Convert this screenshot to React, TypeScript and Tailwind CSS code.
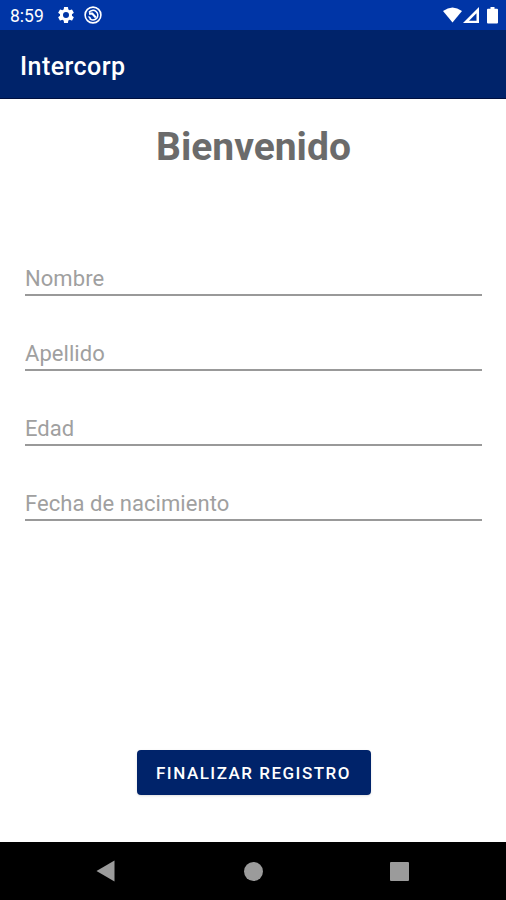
import React from 'react';

const fields = [
  { name: 'nombre', label: 'Nombre' },
  { name: 'apellido', label: 'Apellido' },
  { name: 'edad', label: 'Edad' },
  { name: 'fecha', label: 'Fecha de nacimiento' },
];

const StatusBar: React.FC = () => (
  <div className="flex h-[30px] items-center bg-[#0035a6] pl-[10px] pr-[8px] text-white">
    <span className="w-[34px] whitespace-nowrap pt-[3px] text-[17.5px] leading-none">8:59</span>
    <svg className="ml-[12px] h-5 w-5" viewBox="0 0 24 24" fill="currentColor">
      <path d="M19.14 12.94c.04-.3.06-.61.06-.94 0-.32-.02-.64-.07-.94l2.03-1.58a.49.49 0 0 0 .12-.61l-1.92-3.32a.488.488 0 0 0-.59-.22l-2.39.96c-.5-.38-1.03-.7-1.62-.94l-.36-2.54a.484.484 0 0 0-.48-.41h-3.84c-.24 0-.43.17-.47.41l-.36 2.54c-.59.24-1.13.57-1.62.94l-2.39-.96c-.22-.08-.47 0-.59.22L2.74 8.87c-.12.21-.08.47.12.61l2.03 1.58c-.05.3-.09.63-.09.94s.02.64.07.94l-2.03 1.58a.49.49 0 0 0-.12.61l1.92 3.32c.12.22.37.29.59.22l2.39-.96c.5.38 1.03.7 1.62.94l.36 2.54c.05.24.24.41.48.41h3.84c.24 0 .44-.17.47-.41l.36-2.54c.59-.24 1.13-.56 1.62-.94l2.39.96c.22.08.47 0 .59-.22l1.92-3.32c.12-.22.07-.47-.12-.61l-2.01-1.58zM12 15.6A3.6 3.6 0 1 1 12 8.4a3.6 3.6 0 0 1 0 7.2z" />
    </svg>
    <svg className="ml-[8px] h-[18px] w-[18px]" viewBox="0 0 18 18" fill="none" stroke="currentColor">
      <circle cx="9" cy="9" r="7.9" strokeWidth="1.6" />
      <path d="M5 6.500A4.800 4.800 0 1 1 5.500 12.400" strokeWidth="1.5" />
      <path d="M5 7.600h3.200l3.600 3.800" strokeWidth="2.2" />
      <path d="M4.500 10.500l2.500 2.200" strokeWidth="1.4" />
    </svg>
    <svg className="ml-auto h-[16px] w-[19px]" viewBox="0 0 19 16" fill="currentColor">
      <path d="M9.500 15.500L0 4Q9.500-3 19 4z" />
    </svg>
    <svg className="ml-[1px] h-[16px] w-[16px]" viewBox="0 0 16 16" fill="currentColor">
      <path fillRule="evenodd" d="M0 16L16 0v16zM6 13.700h7.500V6.200z" />
    </svg>
    <svg className="ml-[8px] h-[17px] w-[11px]" viewBox="0 0 11 17" fill="currentColor">
      <path d="M3.500 0h4v1.800h2.500a1 1 0 0 1 1 1V15.500a1 1 0 0 1-1 1H1a1 1 0 0 1-1-1V2.800a1 1 0 0 1 1-1h2.500z" />
    </svg>
  </div>
);

const NavigationBar: React.FC = () => (
  <div className="flex h-[58px] items-center justify-between bg-black pl-[96px] pr-[97px] text-[#9b9b9b]">
    <svg className="h-[22px] w-[19px]" viewBox="0 0 19 22" fill="currentColor">
      <path d="M0.500 11L18.500 0.500v21z" />
    </svg>
    <div className="ml-px h-[19px] w-[19px] rounded-full bg-[#9b9b9b]" />
    <div className="h-[19px] w-[19px] rounded-[1px] bg-[#9b9b9b]" />
  </div>
);

const App: React.FC = () => {
  return (
    <div className="flex h-[900px] w-[506px] flex-col overflow-hidden bg-white font-['Roboto',sans-serif]">
      <StatusBar />
      <header className="flex h-[69px] items-center border-b border-[#00103f] bg-[#00236a] pl-[20px] pt-[6px]">
        <span className="text-[25px] font-medium tracking-[0.45px] text-white">Intercorp</span>
      </header>

      <main className="flex flex-1 flex-col pl-[25px] pr-[24px]">
        <h1 className="mt-[24px] text-center text-[39px] font-bold leading-[48px] text-[#6b6b6b]">Bienvenido</h1>
        <form className="mt-[82px] flex flex-1 flex-col">
          {fields.map((field) => (
            <input
              key={field.name}
              name={field.name}
              placeholder={field.label}
              className="mb-[32px] h-[43px] w-full border-b-2 border-[#999999] bg-transparent pt-[9px] text-[22px] tracking-[0.06px] outline-none placeholder:text-[#a0a0a0]"
            />
          ))}
          <button
            type="button"
            className="mb-[47px] mt-auto h-[45px] w-[234px] self-center rounded-[4px] bg-[#00236a] pt-[2px] text-[17px] font-medium tracking-[1.500px] text-white shadow"
          >
            FINALIZAR REGISTRO
          </button>
        </form>
      </main>

      <NavigationBar />
    </div>
  );
};

export default App;
